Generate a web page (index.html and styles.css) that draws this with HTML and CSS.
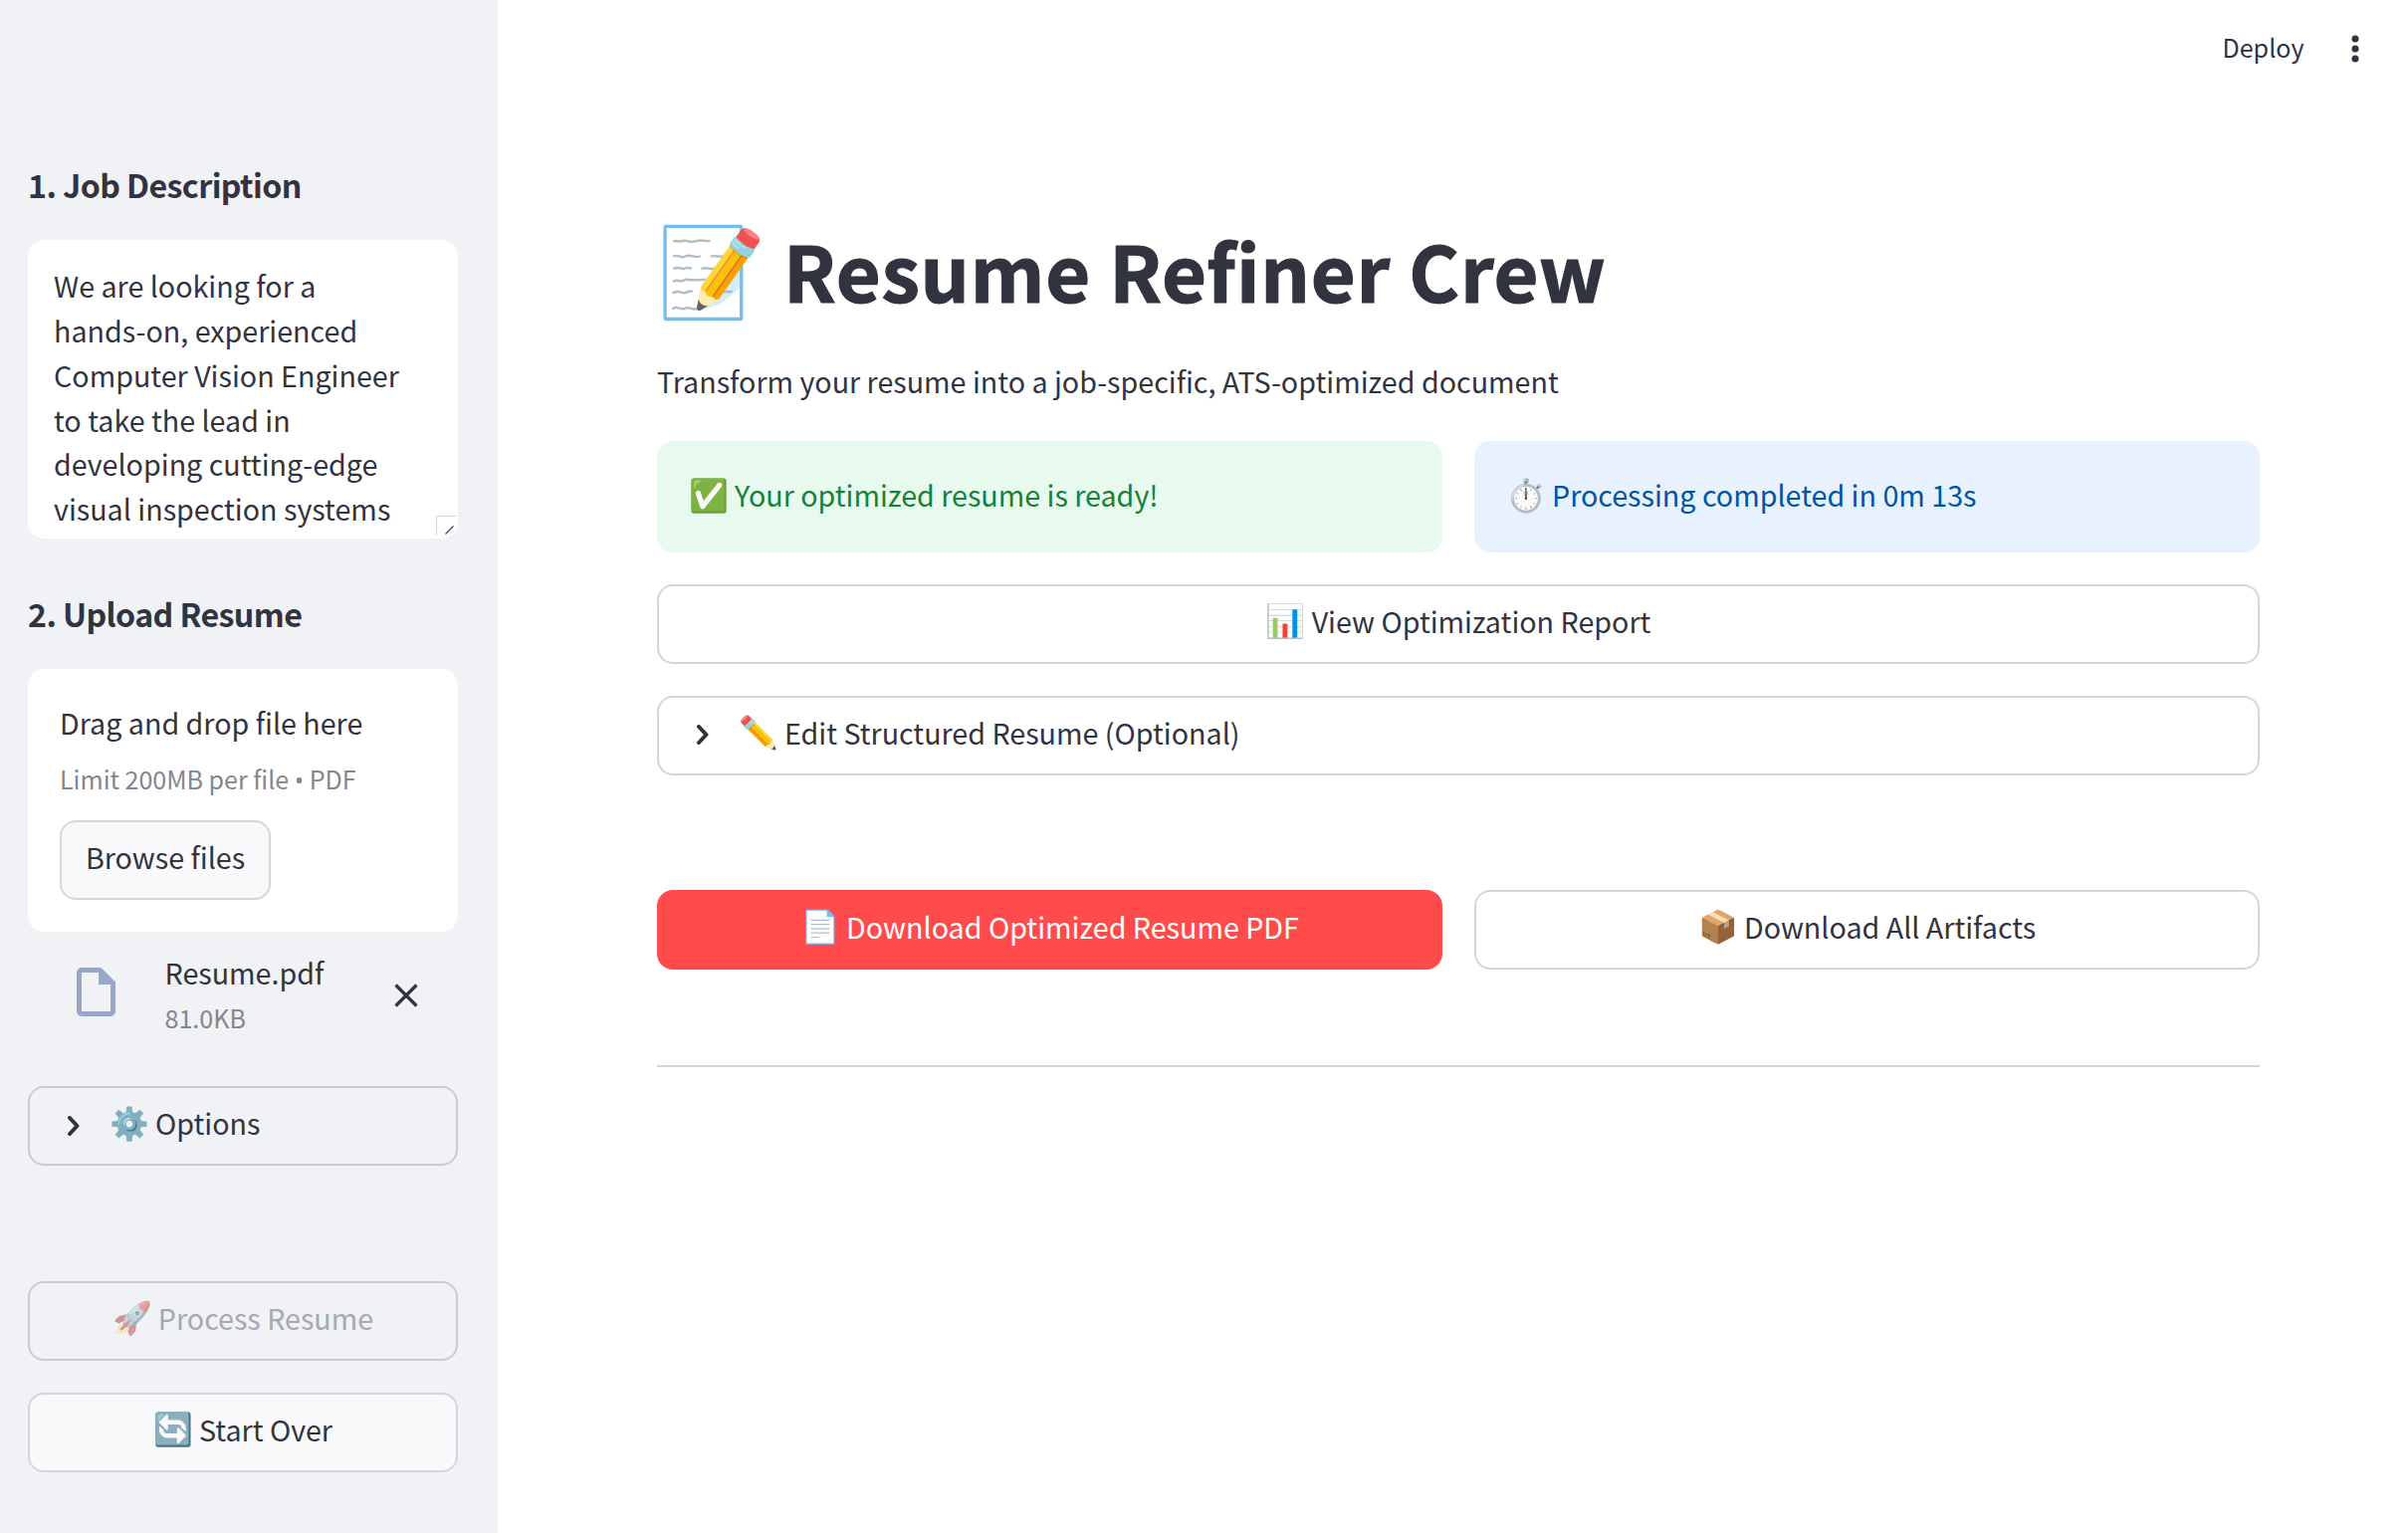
FILE: index.html
```html
<!DOCTYPE html>
<html lang="en">
<head>
<meta charset="utf-8">
<title>Resume Refiner Crew</title>
<link rel="stylesheet" href="styles.css">
</head>
<body>
<div class="app">
  <aside class="sidebar">
    <h3 class="step">1. Job Description</h3>
    <div class="textarea">We are looking for a<br>hands-on, experienced<br>Computer Vision Engineer<br>to take the lead in<br>developing cutting-edge<br>visual inspection systems
      <svg class="resizer" viewBox="0 0 21 21"><path d="M.5 20V.5H20" fill="none" stroke="#d4d4d8"/><path d="M9.5 18.5l8-8" stroke="#4a4a52" stroke-width="1.3"/><path d="M14 18.500l3.500-3.500" stroke="#c4c4c8"/></svg>
    </div>
    <h3 class="step">2. Upload Resume</h3>
    <div class="dropzone">
      <div class="drop-title">Drag and drop file here</div>
      <div class="small">Limit 200MB per file <span class="bullet">•</span> PDF</div>
      <button class="button browse"><span>Browse files</span></button>
    </div>
    <div class="file">
      <svg class="file-icon" viewBox="0 0 39 49"><path fill-rule="evenodd" fill="#98a7c7" d="M5 0h19.500l14.500 14.500V44a5 5 0 0 1-5 5H5a5 5 0 0 1-5-5V5a5 5 0 0 1 5-5zm0 5v39h29V17H22V5z"/></svg>
      <div class="file-info"><div class="file-name">Resume.pdf</div><div class="small">81.0KB</div></div>
      <svg class="close" viewBox="0 0 24 24"><path d="M1.500 1.500l21 21M22.500 1.500l-21 21" stroke="#31333f" stroke-width="3.200"/></svg>
    </div>
    <div class="button expander options"><svg class="chevron" viewBox="0 0 12 20"><path d="M2 2l7.500 8L2 18" /></svg><i class="emoji">⚙️</i><span>Options</span></div>
    <button class="button process disabled"><i class="emoji">🚀</i><span>Process Resume</span></button>
    <button class="button filled"><i class="emoji">🔄</i><span>Start Over</span></button>
  </aside>
  <main class="main">
    <header class="toolbar"><span>Deploy</span><svg class="dots" viewBox="0 0 8 28"><circle cx="4" cy="4" r="3.500"/><circle cx="4" cy="14" r="3.500"/><circle cx="4" cy="24" r="3.500"/></svg></header>
    <div class="content">
      <h1 class="title"><i class="emoji big">📝</i><span>Resume Refiner Crew</span></h1>
      <p class="lead">Transform your resume into a job-specific, ATS-optimized document</p>
      <div class="columns">
        <div class="alert success"><i class="emoji">✅</i><span>Your optimized resume is ready!</span></div>
        <div class="alert info"><i class="emoji">⏱️</i><span>Processing completed in 0m 13s</span></div>
      </div>
      <button class="button report"><i class="emoji">📊</i><span>View Optimization Report</span></button>
      <div class="button expander"><svg class="chevron" viewBox="0 0 12 20"><path d="M2 2l7.500 8L2 18" /></svg><i class="emoji">✏️</i><span>Edit Structured Resume (Optional)</span></div>
      <div class="columns downloads">
        <button class="button primary"><i class="emoji">📄</i><span>Download Optimized Resume PDF</span></button>
        <button class="button"><i class="emoji">📦</i><span>Download All Artifacts</span></button>
      </div>
      <hr class="divider">
    </div>
  </main>
</div>
</body>
</html>
```
FILE: styles.css
```css
* { box-sizing: border-box; }
body {
  margin: 0;
  font-family: "Noto Sans CJK SC", sans-serif;
  font-size: 28.660px;
  line-height: 44.800px;
  color: #31333f;
  background: #fff;
}
.app { display: flex; height: 1540px; overflow: hidden; }
.sidebar { width: 500px; flex: none; background: #f0f2f6; padding: 160px 40px 0 28px; }
.step { margin: 0; height: 50px; font-size: 32.200px; line-height: 50px; font-weight: 700; letter-spacing: -.6px; white-space: nowrap; }
.textarea {
  position: relative; height: 300px; margin: 31px 0 50px; padding: 24.200px 26px 0;
  background: #fff; border-radius: 16px; white-space: nowrap;
}
.resizer { position: absolute; right: 1px; bottom: 2px; width: 21px; height: 21px; }
.dropzone { height: 264px; margin-top: 31px; padding: 32px; background: #fff; border-radius: 16px; white-space: nowrap; }
.small { font-size: 25.100px; line-height: 40px; color: #85868d; }
.dropzone .small { height: 62px; letter-spacing: -.04px; }
.bullet { font-family: "Open Sans", sans-serif; }
.drop-title { height: 58px; }
.button {
  display: flex; align-items: center; justify-content: center;
  width: 100%; height: 80px; padding: 0 24px 6px; border: 2px solid #d6d6d9; border-radius: 16px;
  background: #fff; color: inherit; font: inherit; white-space: nowrap;
}
.browse { width: 212px; padding-bottom: 5px; background: #f9f9fb; }
.filled { background: #f9f9fb; }
.emoji { flex: none; width: 40px; margin-right: 6px; font: 32px/40px "Noto Color Emoji", sans-serif; }
.file { display: flex; height: 155px; padding: 19px 40px 0 49px; }
.file-icon { width: 39px; height: 49px; margin: 17px 49.500px 0 0; }
.file-info { flex: 1; }
.file-name { height: 47px; }
.close { width: 24px; height: 24px; margin-top: 33px; }
.expander { justify-content: flex-start; padding-left: 38px; }
.chevron { width: 12px; height: 20px; margin: 4px 30px 0 0; fill: none; stroke: #31333f; stroke-width: 4; stroke-linecap: round; stroke-linejoin: round; }
.options, .disabled { background: transparent; border-color: #cbccd1; }
.options { padding-bottom: 5px; }
.process { margin: 116px 0 32px; }
.disabled span { color: #a7a8b0; }
.disabled .emoji { opacity: .45; }
.main { flex: 1; }
.toolbar { display: flex; justify-content: flex-end; align-items: center; height: 98px; padding-right: 49px; font-size: 25.100px; }
.toolbar span { margin: -3px 47.500px 0 0; }
.dots { width: 8px; height: 28px; fill: #31333f; }
.content { width: 1610px; margin-left: 160px; padding-top: 119px; }
.title { display: flex; align-items: center; height: 112px; margin: 0; font-size: 77.500px; line-height: 112px; font-weight: 700; white-space: nowrap; }
.title span { margin-top: -7px; letter-spacing: .75px; -webkit-text-stroke: 1.200px #31333f; }
.title .big { width: 109px; margin: 2px 18px 0 0; font-size: 88px; line-height: 112px; }
.lead { margin: 32px 0 37.200px; }
.columns { display: grid; grid-template-columns: 1fr 1fr; gap: 32px; }
.alert { display: flex; align-items: center; height: 112px; padding: 0 32px 4px; border-radius: 16px; white-space: nowrap; }
.alert .emoji { margin-top: 3px; }
.success { background: #e8f9ee; color: #158237; }
.info { background: #e8f2ff; color: #0054a3; }
.report { margin: 32px 0; }
.downloads { margin-top: 115px; }
.primary { background: #ff4b4b; border-color: #ff4b4b; color: #fff; }
.divider { height: 2px; margin: 96px 0 0; border: 0; background: #d6d6d9; }
```
